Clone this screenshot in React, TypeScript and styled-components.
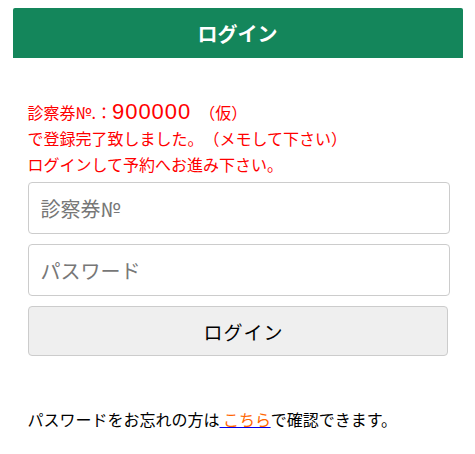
import React from 'react';
import styled, { createGlobalStyle } from 'styled-components';

const GlobalStyle = createGlobalStyle`
  body {
    margin: 0;
    background: #fff;
    font-family: "Noto Sans CJK JP", "Noto Sans", sans-serif;
    text-spacing-trim: space-all;
  }
`;

const Page = styled.div`
  width: 450px;
  margin: 8px auto 0;
`;

const Header = styled.div`
  height: 50px;
  background: #14865b;
  color: #fff;
  font-size: 20px;
  font-weight: bold;
  display: flex;
  align-items: center;
  justify-content: center;
  border-radius: 2px 2px 0 0;
`;

const Body = styled.div`
  padding: 0 15px;
`;

const Message = styled.div`
  margin-top: 41px;
  color: #ff0000;
  font-size: 16px;
  line-height: 26px;
`;

const Number = styled.span`
  font-family: "Liberation Sans", Arial, sans-serif;
  font-size: 22px;
  letter-spacing: 1px;
  margin: 0 8px 0 0;
`;

const Form = styled.form`
  display: flex;
  flex-direction: column;
  gap: 10px;
  margin-top: 5px;
`;

const Input = styled.input`
  box-sizing: border-box;
  width: 422px;
  height: 52px;
  padding: 0 12px;
  border: 1px solid #ccc;
  border-radius: 4px;
  font-family: inherit;
  font-size: 20px;
  color: #333;
  outline: none;

  &::placeholder {
    color: #777;
  }
`;

const Button = styled.button`
  box-sizing: border-box;
  width: 420px;
  height: 50px;
  padding: 0 0 0 12px;
  background: #efefef;
  border: 1px solid #ccc;
  border-radius: 4px;
  font-family: inherit;
  font-size: 19px;
  letter-spacing: 1px;
  color: #000;
  cursor: pointer;
`;

const Note = styled.p`
  margin: 51px 0 0;
  font-size: 16px;
  color: #000;
`;

const Link = styled.a`
  color: #ff6600;
  text-decoration: underline;
  text-decoration-color: #0000ee;
`;

export default function App() {
  return (
    <>
      <GlobalStyle />
      <Page>
        <Header>ログイン</Header>
        <Body>
          <Message>
            診察券№.：<Number>900000</Number>（仮）
            <br />
            で登録完了致しました。（メモして下さい）
            <br />
            ログインして予約へお進み下さい。
          </Message>
          <Form onSubmit={e => e.preventDefault()}>
            <Input type="text" placeholder="診察券№" />
            <Input type="password" placeholder="パスワード" />
            <Button type="submit">ログイン</Button>
          </Form>
          <Note>
            パスワードをお忘れの方は<Link href="#"> こちら</Link>で確認できます。
          </Note>
        </Body>
      </Page>
    </>
  );
}
